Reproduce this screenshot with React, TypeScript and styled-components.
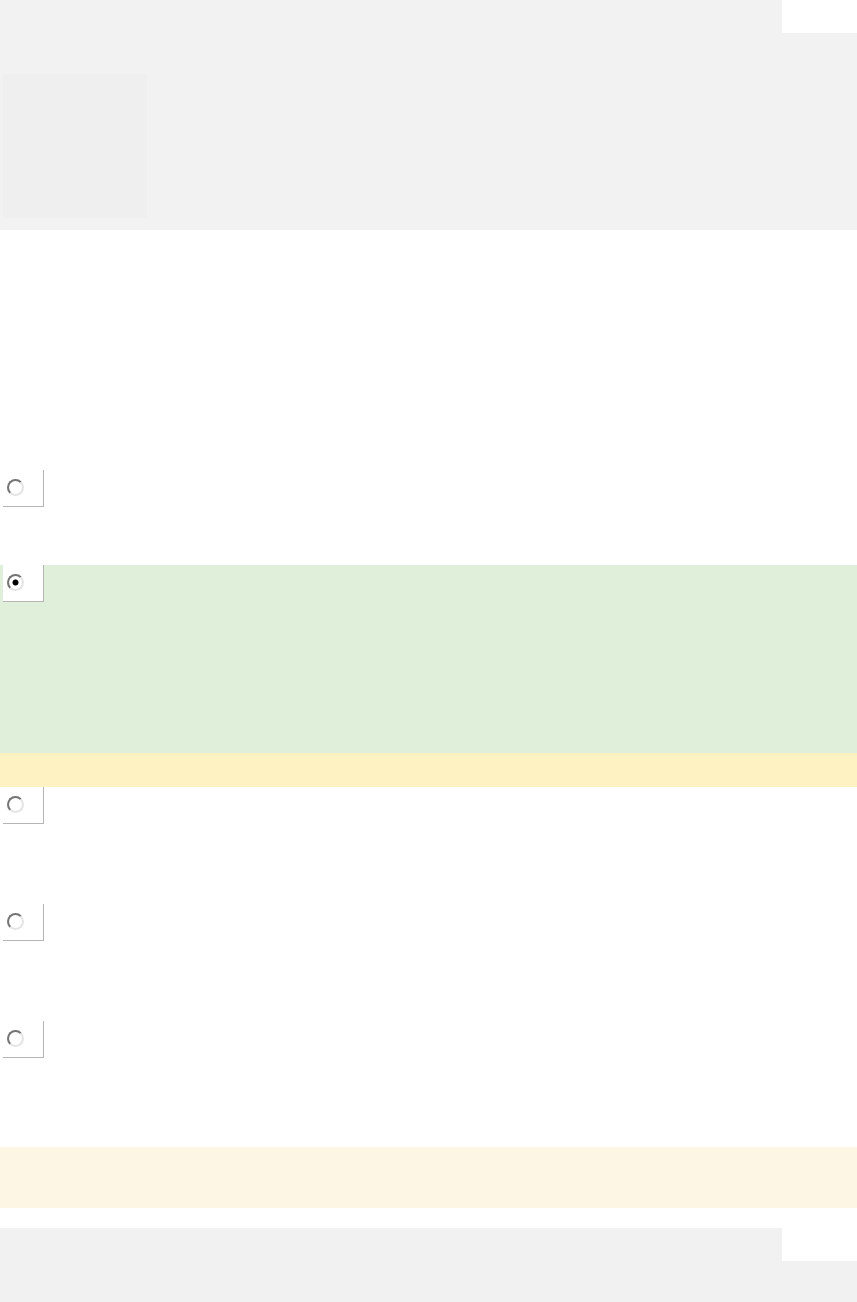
import styled, { createGlobalStyle } from 'styled-components'

type Tone = 'plain' | 'correct'

interface OptionProps {
	height: number
	tone?: Tone
	checked?: boolean
}

const GlobalStyle = createGlobalStyle`
	html, body {
		margin: 0;
		padding: 0;
		background: #ffffff;
		font-family: 'Liberation Sans', Arial, sans-serif;
	}
	* {
		box-sizing: border-box;
	}
`

const Page = styled.div`
	display: flex;
	flex-direction: column;
	width: 100%;
	min-height: 1302px;
`

const Header = styled.header`
	display: flex;
	flex-direction: column;
	height: 230px;
	background: #f2f2f2;
`

const TopBar = styled.div`
	display: flex;
	justify-content: flex-end;
	align-items: flex-start;
	height: 74px;
`

const Tab = styled.div`
	width: 75px;
	height: 33px;
	background: #ffffff;
`

const Thumb = styled.div`
	margin-left: 3px;
	width: 144px;
	height: 144px;
	background: #efefef;
`

const Options = styled.main`
	display: flex;
	flex-direction: column;
	padding-top: 240px;
`

const Row = styled.div<{ $height: number; $tone: Tone }>`
	display: flex;
	align-items: flex-start;
	height: ${p => p.$height}px;
	background: ${p => (p.$tone === 'correct' ? '#dfefda' : '#ffffff')};
`

const RadioBox = styled.label`
	display: flex;
	align-items: center;
	margin-left: 3px;
	width: 41px;
	height: 37px;
	padding: 0 0 2px 4px;
	background: #ffffff;
	border-right: 1px solid #b5b5b5;
	border-bottom: 1px solid #b5b5b5;
`

const Radio = styled.input`
	appearance: none;
	margin: 0;
	width: 17px;
	height: 17px;
	border-radius: 50%;
	border: 2px solid;
	border-color: #747474 #e4e4e4 #e4e4e4 #747474;
	background: #ffffff;

	&:checked {
		background: radial-gradient(circle, #000000 0 2.6px, #ffffff 3.4px);
	}
`

const Feedback = styled.div`
	height: 34px;
	background: #fff2c2;
`

const Note = styled.div`
	height: 61px;
	background: #fdf6e4;
`

const Footer = styled.footer`
	display: flex;
	justify-content: flex-end;
	align-items: flex-start;
	margin-top: 20px;
	flex: 1;
	min-height: 74px;
	background: #f1f1f1;
`

const Option = ({ height, tone = 'plain', checked = false }: OptionProps) => (
	<Row $height={height} $tone={tone}>
		<RadioBox>
			<Radio type='radio' name='answer' checked={checked} readOnly />
		</RadioBox>
	</Row>
)

export default function App() {
	return (
		<Page>
			<GlobalStyle />
			<Header>
				<TopBar>
					<Tab />
				</TopBar>
				<Thumb />
			</Header>
			<Options>
				<Option height={95} />
				<Option height={188} tone='correct' checked />
				<Feedback />
				<Option height={117} />
				<Option height={117} />
				<Option height={126} />
				<Note />
			</Options>
			<Footer>
				<Tab />
			</Footer>
		</Page>
	)
}
